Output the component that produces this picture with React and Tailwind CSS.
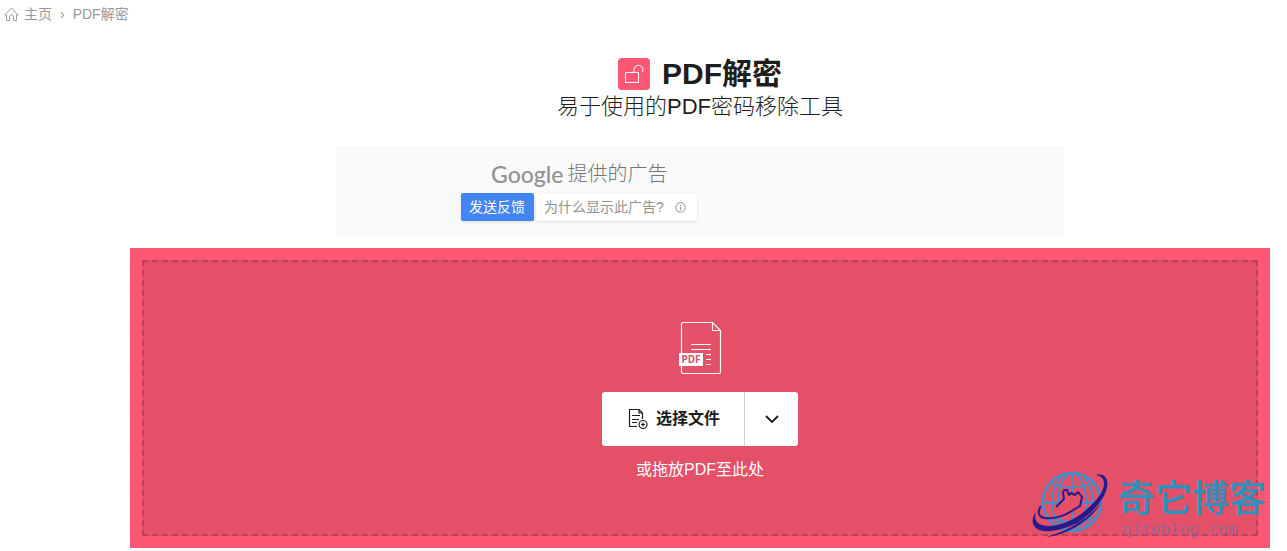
import React from 'react';

const HomeIcon = () => (
  <svg width="16" height="16" viewBox="0 0 16 16" fill="none" stroke="#9b9b9b" strokeWidth="1">
    <path d="M.7 9 7.500 2l6.800 7h-1.800v5.500h-3V11a2 2 0 0 0-4 0v3.500h-3V9z" strokeLinejoin="round" />
  </svg>
);

const UnlockIcon = () => (
  <svg width="32" height="32" viewBox="0 0 32 32" fill="none" stroke="#fff" strokeWidth="1">
    <rect x="7.5" y="14.5" width="13" height="10" />
    <path d="M16 14.500V12a4.500 4.500 0 1 1 8.300 2.200" />
  </svg>
);

const PdfIcon = () => (
  <svg width="44" height="54" viewBox="0 0 44 54" fill="none" stroke="#fff" strokeWidth="1.2">
    <path d="M3.500 32V3Q3.500 1.500 5 1.500H34.500L42.500 9.500V51Q42.500 52.500 41 52.500H5Q3.500 52.500 3.500 51V45" />
    <path d="M34.500 1.500V9.500H42.500" />
    <path d="M13 23.500h20M13 28.500h20M28 33.500h5M28 38.500h5M28 43.500h5" />
    <rect x="1" y="32" width="24" height="13" fill="#fff" stroke="none" />
    <text x="13" y="42" textAnchor="middle" fill="#d4526d" stroke="none" fontSize="10" fontWeight="700" fontFamily="Noto Sans, sans-serif">PDF</text>
  </svg>
);

const AddFileIcon = () => (
  <svg width="20" height="22" viewBox="0 0 20 22" fill="none" stroke="#1d1d1b" strokeWidth="1.2">
    <path d="M9 18.500H1.500V1.500H11L14.500 5V11M11 1.500V5h3.500" />
    <path d="M4 7.500h8M4 11.500h7M4 14.500h5" />
    <circle cx="15" cy="16.500" r="4" />
    <path d="M13 16.500h4M15 14.500v4" />
  </svg>
);

const GlobeLogo = () => (
  <svg width="82" height="70" viewBox="0 0 82 70" fill="none">
    <g stroke="#3f8fca" strokeWidth="1.8">
      <circle cx="40" cy="32" r="29" strokeWidth="2.500" />
      <ellipse cx="40" cy="32" rx="14" ry="29" />
      <path d="M40 3v58M12 33h14M50 33h19M18 13q22 9 44 0M15 47q25 9 50 0M30 5Q10 31 29 58M51 5Q71 31 52 58" />
    </g>
    {/* clear the globe lines behind the hand */}
    <path d="M20 40 29 33 32 29 31 22 35 20 46 24 50 27 48 36 39 42 25 47z" fill="#e45067" />
    <path d="M64 5C71 3 77 7 75 17 73 29 60 44 45 53 29 61 11 64 4 58-1 54 0 47 4 42 2 49 4 53 10 55 19 58 35 54 49 44 63 33 72 22 72 14 72 8 69 6 64 5z" fill="#251b8c" />
    <path d="M14 67C36 61 56 49 70 32 57 53 34 65 14 67z" fill="#251b8c" />
    <path d="M9 36C5 42 6 47 13 48 22 49 32 46 38 42L48 36 50 27 46 22 43 25 39 23 37 25 35 20 32 20 31 23 32 29 28 33 24 37" stroke="#251b8c" strokeWidth="2" strokeLinejoin="round" />
  </svg>
);

const Breadcrumb = () => (
  <nav className="flex h-7 items-center px-1 text-sm text-[#999]">
    <a href="#" className="flex items-center gap-1">
      <HomeIcon />
      主页
    </a>
    <span className="px-2">›</span>
    <a href="#">PDF解密</a>
  </nav>
);

const AdPlaceholder = () => (
  <div className="mx-auto mt-6 h-[90px] max-w-[728px] bg-[#fafafa] pl-[125px] pt-3">
    <div className="flex h-8 items-center gap-1 pl-[30px] text-xl font-light text-[#757575]">
      <span className="font-[Lato,sans-serif] text-[23px] leading-7 font-medium text-[#929292]">Google</span>
      <span>提供的广告</span>
    </div>
    <div className="mt-[3px] flex gap-[2px] text-sm">
      <button className="h-7 rounded-xs bg-[#4285f4] pl-2 pr-[9px] text-white shadow">发送反馈</button>
      <button className="flex h-7 items-center gap-[11px] rounded-xs bg-white px-2 pr-[11px] text-[#919191] shadow">
        为什么显示此广告?
        <svg width="11" height="11" viewBox="0 0 11 11" fill="none" stroke="#919191">
          <circle cx="5.500" cy="5.500" r="4.800" />
          <path d="M5.500 5v3.200M5.500 2.700v1.200" />
        </svg>
      </button>
    </div>
  </div>
);

const Watermark = () => (
  <div className="pointer-events-none absolute right-0 bottom-2 flex items-start gap-1">
    <GlobeLogo />
    <div className="w-[152px] text-[#2b91bd]">
      <p className="pt-2 text-[37px] leading-11 font-medium whitespace-nowrap">奇它博客</p>
      <p className="pl-1 font-['DejaVu_Sans_Mono',monospace] text-base leading-4 text-[#9c6490]">qiteblog.com</p>
    </div>
  </div>
);

const App = () => {
  return (
    <div className="bg-white font-['Liberation_Sans','Noto_Sans_CJK_SC',sans-serif] text-[#1d1d1b]">
      <Breadcrumb />

      <main className="pb-[3px] pl-[130px] pr-[17px] pt-7">
        <header className="text-center">
          <h1 className="flex h-9 items-center justify-center gap-3 text-3xl font-bold">
            <span className="rounded bg-[#ff5775]">
              <UnlockIcon />
            </span>
            PDF解密
          </h1>
          <p className="text-[22px] leading-[30px] font-light">易于使用的PDF密码移除工具</p>
        </header>

        <AdPlaceholder />

        {/* Drop zone */}
        <section className="relative mt-3 bg-[#ff5774] p-3">
          <div className="flex h-[276px] flex-col items-center border-2 border-dashed border-[#b94258] bg-[#e45067] pt-[59px]">
            <PdfIcon />
            <div className="mt-[17px] flex h-[54px] overflow-hidden rounded-[3px] bg-white">
              <button className="flex w-[143px] items-center justify-center gap-2 border-r border-[#d2d2d2] pl-[2px] font-bold">
                <AddFileIcon />
                选择文件
              </button>
              <button className="flex w-[53px] items-center justify-center" aria-label="更多来源">
                <svg width="14" height="9" viewBox="0 0 14 9" fill="none" stroke="#1d1d1b" strokeWidth="1.8">
                  <path d="M1 1l6 6 6-6" />
                </svg>
              </button>
            </div>
            <p className="mt-3 text-base text-white">或拖放PDF至此处</p>
          </div>
          <Watermark />
        </section>
      </main>
    </div>
  );
};

export default App;
